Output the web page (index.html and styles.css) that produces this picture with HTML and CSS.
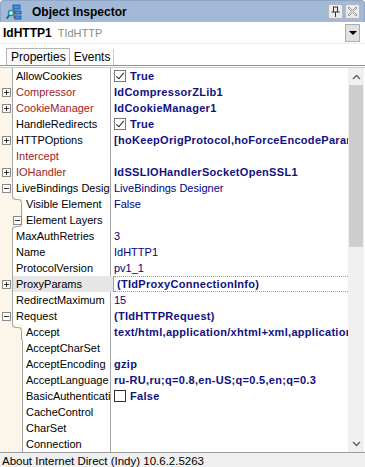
FILE: index.html
```html
<!DOCTYPE html>
<html lang="en">
<head>
    <meta charset="UTF-8">
    <title>Object Inspector</title>
    <link rel="stylesheet" href="styles.css">
</head>
<body>
<div class="inspector">
    <div class="titlebar">
        <svg class="title-icon" width="16" height="16" viewBox="0 0 16 16">
            <rect x="7" y="1" width="7" height="4" fill="#4f8ed8" stroke="#1d5fb0" stroke-width="1"/>
            <rect x="9" y="7" width="6" height="3" fill="#4f8ed8" stroke="#1d5fb0" stroke-width="1"/>
            <rect x="9" y="12" width="6" height="3" fill="#4f8ed8" stroke="#1d5fb0" stroke-width="1"/>
            <path d="M8 5v9h1M8 8.5h1" stroke="#555" fill="none"/>
            <circle cx="5" cy="9" r="2.6" fill="#bfe9f2" stroke="#1d8a9e" stroke-width="1.3"/>
            <path d="M3.2 11 L0.8 14.6" stroke="#1d6e80" stroke-width="2"/>
        </svg>
        <span class="title">Object Inspector</span>
        <span class="tbtn">
            <svg width="9" height="11" viewBox="0 0 9 11"><path d="M2 1h5M2.5 1v5M6.5 1v5M0.5 6h8M4.5 6v5" stroke="#333" fill="none"/></svg>
        </span>
        <span class="tbtn">
            <svg width="11" height="11" viewBox="0 0 11 11"><path d="M2 1l3.5 3.5L9 1l1 1-3.5 3.5L10 9l-1 1-3.5-3.5L2 10l-1-1 3.5-3.5L1 2z" stroke="#8a8a8a" stroke-width="0.8" fill="none"/></svg>
        </span>
    </div>

    <div class="component">
        <span class="comp-name">IdHTTP1</span>
        <span class="comp-type">TIdHTTP</span>
        <span class="combo-btn"><span class="down-tri"></span></span>
    </div>

    <div class="tabs">
        <span class="tab active">Properties</span>
        <span class="tab">Events</span>
    </div>

    <div class="grid-wrap">
        <div class="grid">
            <div class="row">
                <div class="gutter"></div>
                <div class="name">AllowCookies</div>
                <div class="value bold"><span class="check on"></span>True</div>
            </div>
            <div class="row">
                <div class="gutter"><span class="exp plus"></span></div>
                <div class="name ref">Compressor</div>
                <div class="value bold">IdCompressorZLib1</div>
            </div>
            <div class="row">
                <div class="gutter"><span class="exp plus"></span></div>
                <div class="name ref">CookieManager</div>
                <div class="value bold">IdCookieManager1</div>
            </div>
            <div class="row">
                <div class="gutter"></div>
                <div class="name">HandleRedirects</div>
                <div class="value bold"><span class="check on"></span>True</div>
            </div>
            <div class="row">
                <div class="gutter"><span class="exp plus"></span></div>
                <div class="name">HTTPOptions</div>
                <div class="value bold">[hoKeepOrigProtocol,hoForceEncodeParams]</div>
            </div>
            <div class="row">
                <div class="gutter"></div>
                <div class="name ref">Intercept</div>
                <div class="value"></div>
            </div>
            <div class="row">
                <div class="gutter"><span class="exp plus"></span></div>
                <div class="name ref">IOHandler</div>
                <div class="value bold">IdSSLIOHandlerSocketOpenSSL1</div>
            </div>
            <div class="row">
                <div class="gutter"><span class="exp"></span></div>
                <div class="name">LiveBindings Designer</div>
                <div class="value">LiveBindings Designer</div>
            </div>
            <div class="row child first">
                <div class="gutter"></div>
                <div class="name">Visible Element</div>
                <div class="value">False</div>
            </div>
            <div class="row child last">
                <div class="gutter"><span class="exp"></span></div>
                <div class="name">Element Layers</div>
                <div class="value"></div>
            </div>
            <div class="row">
                <div class="gutter"></div>
                <div class="name">MaxAuthRetries</div>
                <div class="value">3</div>
            </div>
            <div class="row">
                <div class="gutter"></div>
                <div class="name">Name</div>
                <div class="value">IdHTTP1</div>
            </div>
            <div class="row">
                <div class="gutter"></div>
                <div class="name">ProtocolVersion</div>
                <div class="value">pv1_1</div>
            </div>
            <div class="row selected">
                <div class="gutter"><span class="exp plus"></span></div>
                <div class="name">ProxyParams</div>
                <div class="value bold">(TIdProxyConnectionInfo)</div>
            </div>
            <div class="row">
                <div class="gutter"></div>
                <div class="name">RedirectMaximum</div>
                <div class="value">15</div>
            </div>
            <div class="row">
                <div class="gutter"><span class="exp"></span></div>
                <div class="name">Request</div>
                <div class="value bold">(TIdHTTPRequest)</div>
            </div>
            <div class="row child first">
                <div class="gutter"></div>
                <div class="name">Accept</div>
                <div class="value bold">text/html,application/xhtml+xml,application/xml;q=0.9,*/*;q=0.8</div>
            </div>
            <div class="row child">
                <div class="gutter"></div>
                <div class="name">AcceptCharSet</div>
                <div class="value"></div>
            </div>
            <div class="row child">
                <div class="gutter"></div>
                <div class="name">AcceptEncoding</div>
                <div class="value bold">gzip</div>
            </div>
            <div class="row child">
                <div class="gutter"></div>
                <div class="name">AcceptLanguage</div>
                <div class="value bold">ru-RU,ru;q=0.8,en-US;q=0.5,en;q=0.3</div>
            </div>
            <div class="row child">
                <div class="gutter"></div>
                <div class="name">BasicAuthentication</div>
                <div class="value bold"><span class="check"></span>False</div>
            </div>
            <div class="row child">
                <div class="gutter"></div>
                <div class="name">CacheControl</div>
                <div class="value"></div>
            </div>
            <div class="row child">
                <div class="gutter"></div>
                <div class="name">CharSet</div>
                <div class="value"></div>
            </div>
            <div class="row child">
                <div class="gutter"></div>
                <div class="name">Connection</div>
                <div class="value"></div>
            </div>
        </div>
        <div class="scrollbar">
            <div class="arrow">
                <svg width="9" height="6" viewBox="0 0 9 6"><path d="M1 5l3.5-3.5L8 5" stroke="#606060" stroke-width="1.4" fill="none"/></svg>
            </div>
            <div class="thumb"></div>
            <div class="track"></div>
            <div class="arrow">
                <svg width="9" height="6" viewBox="0 0 9 6"><path d="M1 1l3.5 3.5L8 1" stroke="#606060" stroke-width="1.4" fill="none"/></svg>
            </div>
        </div>
    </div>

    <div class="status">About Internet Direct (Indy) 10.6.2.5263</div>
</div>
</body>
</html>
```

FILE: styles.css
```css
/* Object Inspector */
body {
    margin: 0;
    background-color: #ffffff;
    font-family: "Liberation Sans", Arial, sans-serif;
    font-size: 11px;
    color: #000;
}
.inspector {
    width: 365px;
    height: 467px;
    overflow: hidden;
    display: flex;
    flex-direction: column;
}

/* barre de titre */
.titlebar {
    height: 22px;
    box-sizing: border-box;
    background-color: #a2bad7;
    border: 1px solid #8ea6c4;
    border-bottom: none;
    border-radius: 4px 4px 0 0;
    display: flex;
    align-items: center;
    padding: 0 4px 0 5px;
}
.title-icon {
    flex: none;
}
.title {
    font-size: 12px;
    font-weight: bold;
    margin-left: 10px;
    flex: 1;
}
.tbtn {
    width: 15px;
    height: 15px;
    box-sizing: border-box;
    background-color: #ebebeb;
    border: 1px solid #b8b8b8;
    border-radius: 2px;
    margin-left: 2px;
    display: flex;
    align-items: center;
    justify-content: center;
}

/* composant selectionne */
.component {
    height: 21px;
    display: flex;
    align-items: center;
    padding-left: 3px;
    border-bottom: 1px solid #ececec;
}
.comp-name {
    font-size: 12px;
    font-weight: bold;
}
.comp-type {
    color: #8a8a8a;
    margin-left: 6px;
    flex: 1;
}
.combo-btn {
    width: 15px;
    height: 18px;
    box-sizing: border-box;
    margin-right: 5px;
    background-color: #e1e1e1;
    border: 1px solid #adadad;
    display: flex;
    align-items: center;
    justify-content: center;
}
.down-tri {
    border-left: 4px solid transparent;
    border-right: 4px solid transparent;
    border-top: 4px solid #000;
}

/* onglets */
.tabs {
    height: 21px;
    display: flex;
    align-items: flex-end;
    padding-left: 6px;
    border-bottom: 1px solid #8f8f8f;
}
.tab {
    height: 16px;
    line-height: 16px;
    padding: 0 3px 0 4px;
    font-size: 12px;
    border-right: 1px solid #c8c8c8;
}
.tab.active {
    border: 1px solid #b5b5b5;
    border-bottom: none;
    background-color: #fafafa;
}

/* grille des proprietes */
.grid-wrap {
    display: flex;
    margin-top: 1px;
    border-top: 1px solid #c9c9c9;
    height: 384px;
}
.grid {
    width: 348px;
    overflow: hidden;
}
.row {
    display: flex;
    height: 16px;
    line-height: 16px;
}
.gutter {
    width: 12px;
    flex: none;
    background-color: #fcf6ea;
    border-right: 1px solid #a5a5a5;
    position: relative;
}
.child .gutter {
    width: 22px;
}
/* courbes de l'arbre (debut / fin d'un groupe d'enfants) */
.child.first .gutter,
.child.last .gutter {
    border-right-color: transparent;
}
.child.first .gutter::before {
    content: "";
    position: absolute;
    left: 12px;
    top: 0;
    width: 4px;
    height: 3px;
    border-left: 1px solid #a5a5a5;
    border-bottom: 1px solid #a5a5a5;
    border-bottom-left-radius: 4px;
}
.child.first .gutter::after {
    content: "";
    position: absolute;
    left: 17px;
    top: 3px;
    bottom: 0;
    width: 4px;
    border-top: 1px solid #a5a5a5;
    border-right: 1px solid #a5a5a5;
    border-top-right-radius: 4px;
}
.child.last .gutter::before {
    content: "";
    position: absolute;
    left: 17px;
    top: 0;
    width: 4px;
    height: 14px;
    border-right: 1px solid #a5a5a5;
    border-bottom: 1px solid #a5a5a5;
    border-bottom-right-radius: 4px;
}
.child.last .gutter::after {
    content: "";
    position: absolute;
    left: 12px;
    top: 14px;
    width: 4px;
    height: 5px;
    border-top: 1px solid #a5a5a5;
    border-left: 1px solid #a5a5a5;
    border-top-left-radius: 4px;
    z-index: 1;
}
.exp {
    position: absolute;
    left: 2px;
    top: 4px;
    width: 9px;
    height: 9px;
    box-sizing: border-box;
    border: 1px solid #8c8c8c;
    background-color: #fff;
    z-index: 2;
}
.child .exp {
    left: 13px;
}
.exp::before {
    content: "";
    position: absolute;
    left: 1px;
    top: 3px;
    width: 5px;
    height: 1px;
    background-color: #303030;
}
.exp.plus::after {
    content: "";
    position: absolute;
    left: 3px;
    top: 1px;
    width: 1px;
    height: 5px;
    background-color: #303030;
}
.name {
    flex: 1;
    padding-left: 3px;
    border-right: 1px solid #a5a5a5;
    white-space: nowrap;
    overflow: hidden;
}
.name.ref {
    color: #a41a1a;
}
.value {
    width: 234px;
    flex: none;
    padding-left: 3px;
    white-space: nowrap;
    overflow: hidden;
    color: #000080;
    display: flex;
    align-items: center;
}
.value.bold {
    font-weight: bold;
    color: #11117f;
    letter-spacing: 0.3px;
}
.selected .name {
    background-color: #e6e6e6;
}
.selected .value {
    box-sizing: border-box;
    border-top: 1px dotted #9a9a9a;
    border-bottom: 1px dotted #9a9a9a;
}
.check {
    width: 12px;
    height: 12px;
    box-sizing: border-box;
    border: 1px solid #333;
    background-color: #fff;
    margin-right: 4px;
    position: relative;
}
.check.on {
    border-color: #7a7a7a;
}
.check.on::after {
    content: "";
    position: absolute;
    left: 3px;
    top: 0px;
    width: 3px;
    height: 7px;
    border-right: 1px solid #222;
    border-bottom: 1px solid #222;
    transform: rotate(40deg);
}

/* barre de defilement */
.scrollbar {
    width: 16px;
    flex: none;
    background-color: #f0f0f0;
    display: flex;
    flex-direction: column;
}
.arrow {
    height: 17px;
    display: flex;
    align-items: center;
    justify-content: center;
}
.thumb {
    height: 162px;
    margin: 0 1px;
    background-color: #cdcdcd;
}
.track {
    flex: 1;
}

/* barre d'etat */
.status {
    border-top: 1px solid #9c9c9c;
    background-color: #f0f0f0;
    padding: 2px 0 0 2px;
    font-size: 11.5px;
    flex: 1;
}
```
